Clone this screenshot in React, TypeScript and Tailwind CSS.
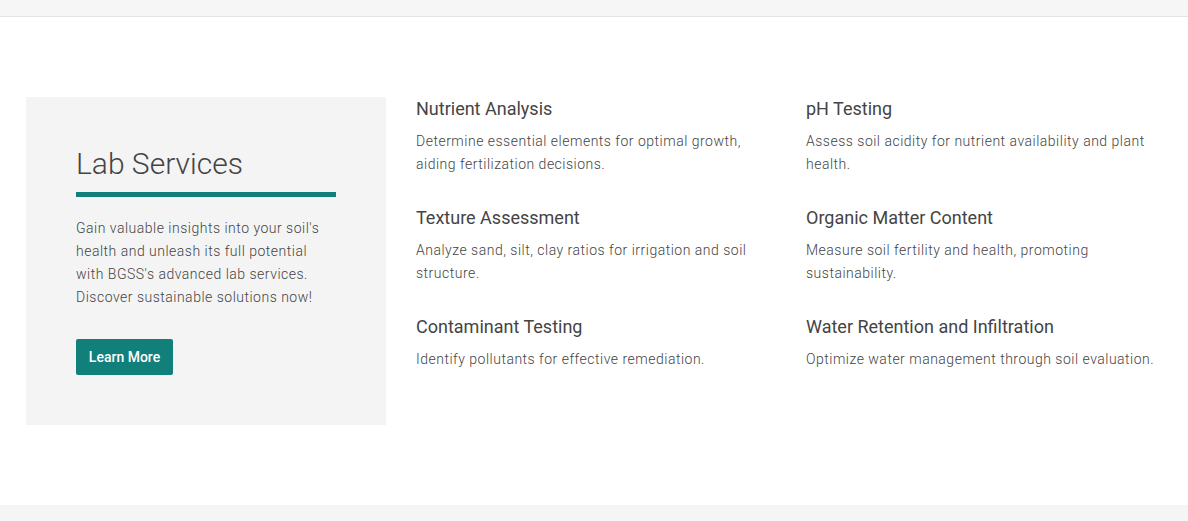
const services = [
  {
    title: 'Nutrient Analysis',
    text: 'Determine essential elements for optimal growth, aiding fertilization decisions.',
  },
  {
    title: 'pH Testing',
    text: 'Assess soil acidity for nutrient availability and plant health.',
  },
  {
    title: 'Texture Assessment',
    text: 'Analyze sand, silt, clay ratios for irrigation and soil structure.',
  },
  {
    title: 'Organic Matter Content',
    text: 'Measure soil fertility and health, promoting sustainability.',
  },
  {
    title: 'Contaminant Testing',
    text: 'Identify pollutants for effective remediation.',
  },
  {
    title: 'Water Retention and Infiltration',
    text: 'Optimize water management through soil evaluation.',
  },
]

export default function App() {
  return (
    <div className="min-h-screen bg-white font-['Roboto',sans-serif]">
      <div className="h-[17px] border-b border-[#e4e4e4] bg-[#f6f6f6]" />

      <section className="flex py-20 pl-[26px]">
        {/* intro card */}
        <div className="w-[360px] shrink-0 bg-[#f4f4f4] px-[50px] pt-12 pb-[50px]">
          <h2 className="text-[30px] leading-[38px] font-light text-[#444]">Lab Services</h2>
          <div className="mt-[9px] h-[5px] w-[260px] bg-[#11807b]" />
          <p className="mt-5 text-[14px] leading-[23px] font-light tracking-[0.5px] text-[#444]">
            Gain valuable insights into your soil's health and unleash its full potential with BGSS's advanced lab
            services. Discover sustainable solutions now!
          </p>
          <button className="mt-[30px] h-9 w-[97px] rounded-[2px] bg-[#11807b] text-[14px] font-medium text-white">
            Learn More
          </button>
        </div>

        {/* service list */}
        <div className="ml-[30px] grid grid-cols-[390px_390px] content-start gap-y-[30px]">
          {services.map((s) => (
            <div key={s.title}>
              <h3 className="text-[18px] leading-6 text-[#444]">{s.title}</h3>
              <p className="mt-[9px] pr-[30px] text-[14px] leading-[23px] font-light tracking-[0.5px] text-[#444]">
                {s.text}
              </p>
            </div>
          ))}
        </div>
      </section>

      <div className="h-4 bg-[#f5f5f5]" />
    </div>
  )
}
